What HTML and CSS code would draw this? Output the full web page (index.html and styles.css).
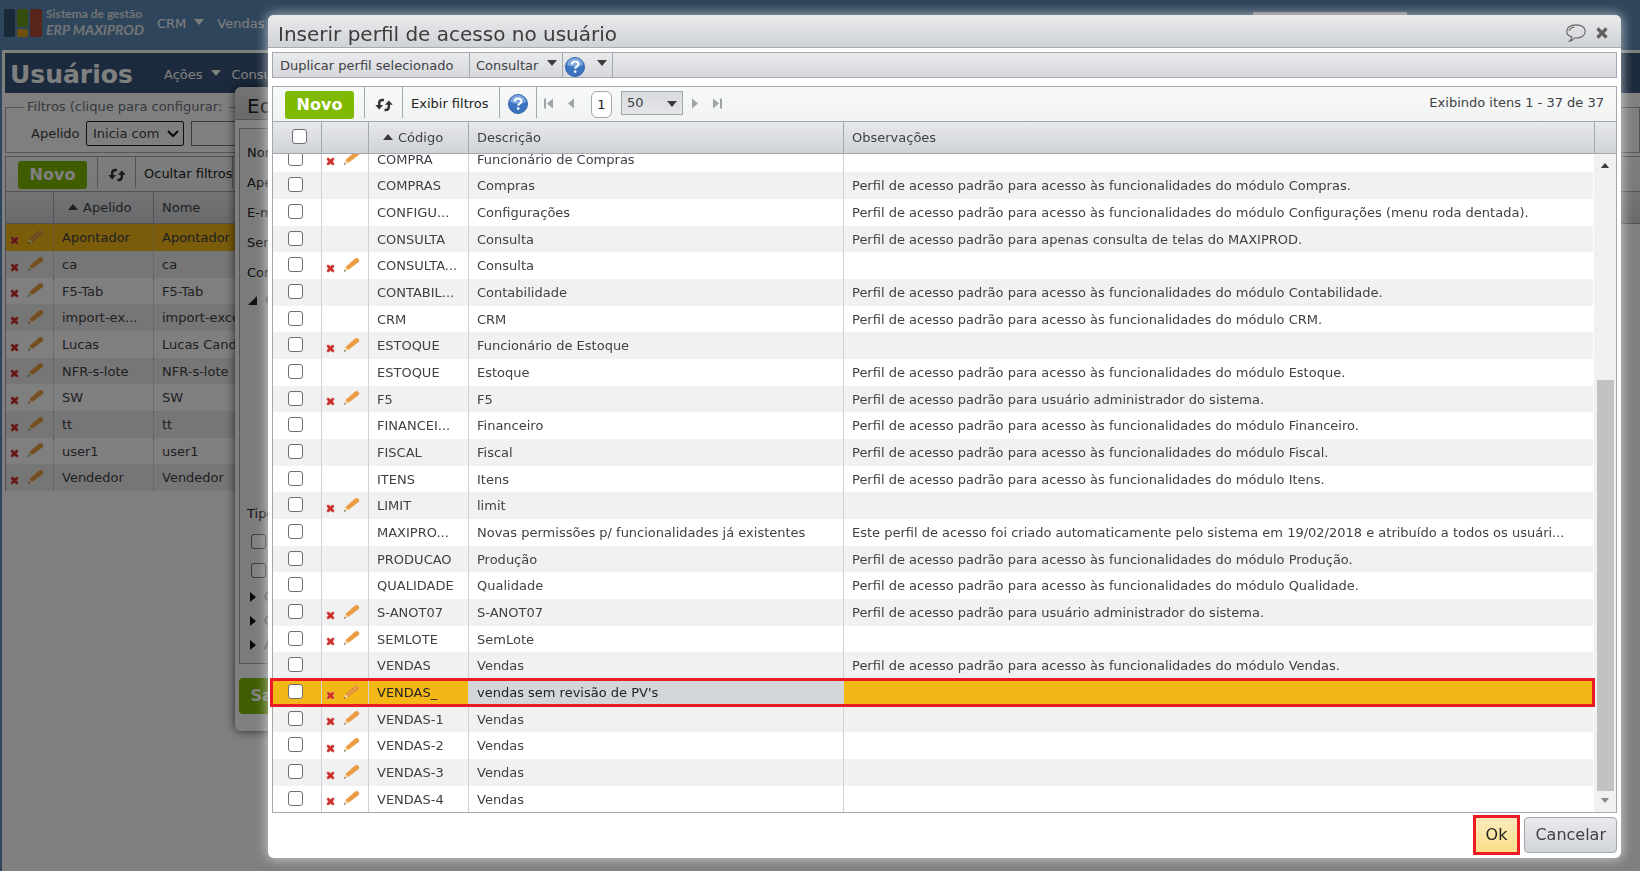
FILE: index.html
```html
<!DOCTYPE html>
<html lang="pt-BR">
<head>
<meta charset="utf-8">
<title>Usuários - ERP MAXIPROD</title>
<link rel="stylesheet" href="styles.css">
</head>
<body>
<svg class="defs" aria-hidden="true">
  <symbol id="i-pencil" viewBox="0 0 18 16"><path d="M1 15l1.600-4.800 3.200 2.800z" fill="#f3d9a0"/><path d="M1 15.200l.8-2 1.300 1.100z" fill="#4a4038"/><path d="M2.600 10.200L12.800 1q2.200-1 3.700.6t.3 3.200L5.800 13z" fill="#eb9d45"/></symbol>
  <symbol id="i-pencil-on" viewBox="0 0 18 16"><path d="M1 15l1.600-4.800 3.200 2.800z" fill="#f3d9a0"/><path d="M1 15.200l.8-2 1.300 1.100z" fill="#4a4038"/><path d="M2.600 10.200L12.800 1q2.200-1 3.700.6t.3 3.200L5.800 13z" fill="#eb9d45"/><path d="M3 11L14 1.500M5.500 13L16.500 4" stroke="#b5702a" stroke-dasharray="1.500 1.500" fill="none"/></symbol>
  <symbol id="i-x" viewBox="0 0 9 9"><path d="M1 1h2l1.500 1.500L6 1h2v2L6.500 4.500 8 6v2H6L4.500 6.500 3 8H1V6l1.500-1.500L1 3z" fill="#cf2b2b" stroke="#d98a80" stroke-width=".6"/></symbol>
  <symbol id="i-refresh" viewBox="0 0 18 14"><g fill="none" stroke="#333" stroke-width="2.400"><path d="M9 2H7.500Q4.200 2 4.200 5v3.500"/><path d="M9.500 12h1q3.300 0 3.300-3V5.500"/></g><path d="M.3 7h7.800L4.200 11.600zM9.900 6.800h7.800L13.800 2.400z" fill="#333"/></symbol>
  <symbol id="i-help" viewBox="0 0 20 20"><circle cx="10" cy="10" r="9.500" fill="#3c73c0" stroke="#3264ae"/><path d="M2 8a8 7 0 0 1 16 0q-8 3-16 0z" fill="#7fa9de"/><path d="M6.800 7.600q0-3.200 3.300-3.200t3.300 2.800q0 1.500-1.700 2.500-1.400.8-1.400 2" fill="none" stroke="#fff" stroke-width="2"/><circle cx="10.200" cy="14.600" r="1.300" fill="#fff"/></symbol>
  <symbol id="i-down" viewBox="0 0 10 6"><path d="M0 0h10L5 6z" fill="currentColor"/></symbol>
  <symbol id="i-up" viewBox="0 0 10 6"><path d="M0 6h10L5 0z" fill="currentColor"/></symbol>
  <symbol id="i-left" viewBox="0 0 6 10"><path d="M6 0v10L0 5z" fill="currentColor"/></symbol>
  <symbol id="i-right" viewBox="0 0 6 10"><path d="M0 0v10l6-5z" fill="currentColor"/></symbol>
  <symbol id="i-first" viewBox="0 0 9 10"><path d="M0 0h2v10H0zM9 0v10L3 5z" fill="currentColor"/></symbol>
  <symbol id="i-last" viewBox="0 0 9 10"><path d="M7 0h2v10H7zM0 0v10l6-5z" fill="currentColor"/></symbol>
</svg>

<div class="app">
  <header class="top">
    <svg class="logo" viewBox="0 0 38 28"><rect width="11" height="28" rx="2" fill="#34536f"/><rect x="13" width="11" height="18" rx="2" fill="#6f9a1c"/><rect x="13" y="20" width="11" height="8" rx="2" fill="#d8a21c"/><rect x="26" width="12" height="28" rx="2" fill="#b04a34"/></svg>
    <div class="brand"><span>Sistema de gestão</span><em>ERP MAXIPROD</em></div>
    <nav class="topnav">
      <a href="#">CRM <svg class="ar"><use href="#i-down"/></svg></a>
      <a href="#">Vendas</a>
    </nav>
    <input class="search" aria-label="Pesquisar">
  </header>
  <main class="page">
    <div class="titlebar">
      <h1>Usuários</h1>
      <a href="#">Ações <svg class="ar"><use href="#i-down"/></svg></a>
      <a href="#">Consultar</a>
    </div>
    <fieldset class="filters">
      <legend>Filtros (clique para configurar: </legend>
      <label for="ap">Apelido</label>
      <span class="selwrap"><select id="op" aria-label="Operador"><option>Inicia com</option></select><svg viewBox="0 0 12 8"><path d="M1 1l5 5 5-5" fill="none" stroke="#111" stroke-width="2"/></svg></span>
      <input id="ap" type="text">
    </fieldset>
    <section class="grid back">
      <div class="gtools">
        <div class="cell c-novo"><button class="novo">Novo</button></div>
        <div class="cell c-ref"><svg class="ref"><use href="#i-refresh"/></svg></div>
        <div class="cell c-txt">Ocultar filtros</div>
      </div>
      <table class="users">
        <colgroup><col class="u1"><col class="u2"><col class="u3"><col></colgroup>
        <thead><tr><th></th><th class="sorted"><svg class="ar"><use href="#i-up"/></svg>Apelido</th><th>Nome</th><th></th></tr></thead>
        <tbody id="users"></tbody>
      </table>
    </section>
  </main>

  <div class="dlg1">
    <div class="d1title">Editar</div>
    <div class="d1body">
      <span>Nome</span><span>Apelido</span><span>E-mail</span><span>Senha</span><span>Confirmar</span>
      <span class="node open"><svg viewBox="0 0 8 8"><path d="M8 0v8H0z" fill="#222"/></svg>Clientes</span>
      <span class="tipo">Tipo</span>
      <label class="ck"><input type="checkbox" aria-label="Opção 1"></label>
      <label class="ck"><input type="checkbox" aria-label="Opção 2"></label>
      <span class="node"><svg viewBox="0 0 6 10"><path d="M0 0v10l6-5z" fill="#111"/></svg>Outros</span>
      <span class="node"><svg viewBox="0 0 6 10"><path d="M0 0v10l6-5z" fill="#111"/></svg>Outros</span>
      <span class="node"><svg viewBox="0 0 6 10"><path d="M0 0v10l6-5z" fill="#111"/></svg>Ajustes</span>
    </div>
    <button class="salvar">Salvar</button>
  </div>
  <div class="shade"></div>
</div>

<div class="modal" role="dialog" aria-labelledby="mt">
  <div class="mtitle">
    <h2 id="mt">Inserir perfil de acesso no usuário</h2>
    <button class="ico" aria-label="Comentário"><svg class="bubble" viewBox="0 0 20 18" fill="none" stroke="#666" stroke-width="1.200"><path d="M5.800 12.900Q.7 11.400.7 7.400C.7 3.300 4.800.8 10 .8s9.300 2.500 9.300 6.600-4.100 6.600-9.300 6.600H8.500Q6.500 16.700 3.600 17.200 5.600 15.500 5.800 12.900z"/><path d="M3.200 7Q3.800 3.700 8.500 3"/></svg></button>
    <button class="ico" aria-label="Fechar"><svg class="close" viewBox="0 0 12 12"><path d="M1.500 1.500l9 9M10.500 1.500l-9 9" stroke="#606060" stroke-width="3.200"/></svg></button>
  </div>
  <div class="mbody">
    <div class="menu">
      <button class="m-dup">Duplicar perfil selecionado</button>
      <button class="m-con">Consultar <svg class="ar"><use href="#i-down"/></svg></button>
      <button class="m-help" aria-label="Ajuda"><svg class="help"><use href="#i-help"/></svg><svg class="ar"><use href="#i-down"/></svg></button>
    </div>
    <section class="grid front">
      <div class="gtools">
        <div class="cell c-novo"><button class="novo">Novo</button></div>
        <div class="cell c-ref"><svg class="ref"><use href="#i-refresh"/></svg></div>
        <div class="cell c-txt">Exibir filtros</div>
        <div class="cell c-help"><svg class="help"><use href="#i-help"/></svg></div>
        <div class="pager">
          <svg class="p9"><use href="#i-first"/></svg><svg class="p6"><use href="#i-left"/></svg>
          <input class="pg" value="1" aria-label="Página">
          <span class="size"><select aria-label="Itens por página"><option>50</option></select><svg class="ar"><use href="#i-down"/></svg></span>
          <svg class="p6"><use href="#i-right"/></svg><svg class="p9"><use href="#i-last"/></svg>
        </div>
        <div class="count">Exibindo itens 1 - 37 de 37</div>
      </div>
      <table class="head">
        <colgroup><col class="k1"><col class="k2"><col class="k3"><col class="k4"><col><col class="k6"></colgroup>
        <thead><tr><th class="all"><input type="checkbox" aria-label="Selecionar todos"></th><th></th><th class="sorted"><svg class="ar"><use href="#i-up"/></svg>Código</th><th>Descrição</th><th>Observações</th><th></th></tr></thead>
      </table>
      <div class="gbody">
        <div class="clip">
          <table class="rows">
            <colgroup><col class="k1"><col class="k2"><col class="k3"><col class="k4"><col></colgroup>
            <tbody id="rows"></tbody>
          </table>
        </div>
        <div class="bar"><svg class="ar"><use href="#i-up"/></svg><i></i><svg class="ar dn"><use href="#i-down"/></svg></div>
        <div class="mark"></div>
      </div>
    </section>
    <div class="foot"><button class="ok">Ok</button><button class="cancel">Cancelar</button></div>
  </div>
</div>
<script src="app.js"></script>
</body>
</html>
```
FILE: app.js
```js
const base = 'Perfil de acesso padrão para acesso às funcionalidades do módulo ';
const admin = 'Perfil de acesso padrão para usuário administrador do sistema.';
const icons = on => '<svg class="x"><use href="#i-x"/></svg><svg class="pen"><use href="#' + (on ? 'i-pencil-on' : 'i-pencil') + '"/></svg>';

// code, description, notes, editable, selected
const profiles = [
  ['COMPRA', 'Funcionário de Compras', '', 1],
  ['COMPRAS', 'Compras', base + 'Compras.'],
  ['CONFIGU...', 'Configurações', base + 'Configurações (menu roda dentada).'],
  ['CONSULTA', 'Consulta', 'Perfil de acesso padrão para apenas consulta de telas do MAXIPROD.'],
  ['CONSULTA...', 'Consulta', '', 1],
  ['CONTABIL...', 'Contabilidade', base + 'Contabilidade.'],
  ['CRM', 'CRM', base + 'CRM.'],
  ['ESTOQUE', 'Funcionário de Estoque', '', 1],
  ['ESTOQUE', 'Estoque', base + 'Estoque.'],
  ['F5', 'F5', admin, 1],
  ['FINANCEI...', 'Financeiro', base + 'Financeiro.'],
  ['FISCAL', 'Fiscal', base + 'Fiscal.'],
  ['ITENS', 'Itens', base + 'Itens.'],
  ['LIMIT', 'limit', '', 1],
  ['MAXIPRO...', 'Novas permissões p/ funcionalidades já existentes', 'Este perfil de acesso foi criado automaticamente pelo sistema em 19/02/2018 e atribuído a todos os usuári...'],
  ['PRODUCAO', 'Produção', base + 'Produção.'],
  ['QUALIDADE', 'Qualidade', base + 'Qualidade.'],
  ['S-ANOT07', 'S-ANOT07', admin, 1],
  ['SEMLOTE', 'SemLote', '', 1],
  ['VENDAS', 'Vendas', base + 'Vendas.'],
  ['VENDAS_', "vendas sem revisão de PV's", '', 1, 1],
  ['VENDAS-1', 'Vendas', '', 1],
  ['VENDAS-2', 'Vendas', '', 1],
  ['VENDAS-3', 'Vendas', '', 1],
  ['VENDAS-4', 'Vendas', '', 1]
];
document.getElementById('rows').innerHTML = profiles.map(([c, d, o, e, on]) =>
  `<tr class="${on ? 'on' : ''}"><td class="sel"><input type="checkbox" aria-label="${c}"></td><td class="act">${e ? icons(on) : ''}</td><td>${c}</td><td>${d}</td><td>${o}</td></tr>`).join('');

const users = ['Apontador', 'ca', 'F5-Tab', ['import-ex...', 'import-excel'], ['Lucas', 'Lucas Candido'], 'NFR-s-lote', 'SW', 'tt', 'user1', 'Vendedor'];
document.getElementById('users').innerHTML = users.map((u, i) => {
  const [a, n] = Array.isArray(u) ? u : [u, u];
  return `<tr class="${i ? '' : 'on'}"><td class="act">${icons(!i)}</td><td>${a}</td><td>${n}</td></tr>`;
}).join('');
```
FILE: styles.css
```css
* { box-sizing: border-box; }
body { margin: 0; font: 13px/16px Verdana, "DejaVu Sans", sans-serif; color: #3f4145; }
button, input, select { font: inherit; color: inherit; margin: 0; }
a { color: inherit; text-decoration: none; }
svg { display: block; flex: none; }
.defs { position: absolute; width: 0; height: 0; }
.ar { width: 10px; height: 6px; color: #3c3c3c; }
input[type="checkbox"] { appearance: none; display: block; width: 15px; height: 15px; border: 1px solid #6f6f72; border-radius: 3px; background: #fff; }

.app { position: relative; min-height: 100vh; overflow: hidden; background: #5c8ab6; display: flex; flex-direction: column; }
.shade { position: absolute; inset: 0; background: rgba(0, 0, 0, .5); }
.top { display: flex; height: 50px; padding-left: 4px; color: #fff; }
.logo { width: 38px; height: 28px; margin-top: 9px; }
.brand { display: flex; flex-direction: column; width: 115px; padding: 6px 0 0 4px; font: bold 12px/15px Lato, sans-serif; white-space: nowrap; color: #e4e8ec; }
.brand em { font-size: 14px; line-height: 17px; }
.topnav { display: flex; gap: 13px; padding-top: 16px; }
.topnav a, .titlebar a { display: flex; gap: 8px; }
.topnav .ar, .titlebar .ar { color: #fff; margin-top: 3px; }
.search { width: 154px; height: 22px; margin: 12px 233px 0 auto; border: 0; background: #fff; }
.page { flex: 1; margin-left: 2px; background: #fff; padding: 3px 0 0 3px; }
.titlebar { display: flex; gap: 18px; height: 40px; padding: 14px 0 0 5px; background: #365478; color: #fff; white-space: nowrap; }
.titlebar h1 { width: 136px; margin: -7px 0 0; font-size: 25px; line-height: 30px; }
.titlebar a + a { margin-left: -7px; }
.filters { display: flex; align-items: center; height: 54px; margin: 6px 0 0; padding: 0 0 0 25px; border: 1px solid #a8abb3; }
.filters legend { margin-left: -7px; padding: 0 3px; color: #6d727a; line-height: 16px; white-space: pre; }
.filters label { width: 55px; }
.selwrap { position: relative; }
.selwrap select { appearance: none; width: 98px; height: 25px; padding: 0 6px; border: 1px solid #222; border-radius: 2px; background: #fff; }
.selwrap svg { position: absolute; right: 5px; top: 9px; width: 12px; height: 8px; }
.filters input { width: 150px; height: 25px; margin-left: 7px; border: 1px solid #777; }

.grid { border: 1px solid #a3a7af; }
.gtools { display: flex; align-items: stretch; height: 34px; background: linear-gradient(#f8faf9, #f1f2f2); }
.cell { display: flex; justify-content: center; align-items: center; height: 31px; border-right: 1px solid #a3a7af; color: #222; white-space: nowrap; }
.c-novo { width: 92px; }
.c-ref { width: 38px; }
.cell.c-txt { width: 97px; padding: 2px 0 0 8px; justify-content: flex-start; }
.c-help { width: 37px; }
.novo { flex: none; width: 69px; height: 28px; margin: 4px 0 0 2px; padding: 0; border: 0; border-radius: 3px; background: #7fba00; color: #fff; font-weight: bold; font-size: 16px; line-height: 26px; }
.ref { width: 18px; height: 14px; margin-top: 4px; }
.help { width: 20px; height: 20px; }
.c-help .help { margin-top: 2px; }

table { width: 100%; table-layout: fixed; border-collapse: separate; border-spacing: 0; }
th { height: 33px; padding: 0 8px; text-align: left; font-weight: normal; border: solid #a3a7af; border-width: 1px 1px 1px 0; background: linear-gradient(#e7e8eb, #d0d3d6); white-space: nowrap; }
th:last-child { border-right: 0; }
.sorted .ar { display: inline-block; margin: 0 5px 2px 6px; }
td { padding: 1px 8px 0; overflow: hidden; text-overflow: ellipsis; white-space: nowrap; border-right: 1px solid #d0d2d5; }
td:last-child { border-right: 0; }
td.act { padding: 0; }
.act svg { display: inline-block; vertical-align: middle; }
.x { width: 9px; height: 9px; margin: 4px 8px 0 4px; }
.pen { width: 17px; height: 16px; margin-top: -3px; }
tbody tr { height: 27px; }

.back { margin-top: 3px; border-right: 0; border-bottom: 0; }
.u1 { width: 48px; }
.u2 { width: 100px; }
.u3 { width: 400px; }
.users td { border-right: 1px dotted #b5b5b8; }
.users tr:nth-child(3n) { height: 26px; }
.users tbody tr:nth-child(even) td { background: #ececec; }
.users tbody tr.on td { background: #f4b816; }

.dlg1 { position: absolute; left: 235px; top: 87px; right: 200px; height: 644px; padding: 0 4px; border-radius: 6px; background: #fff; box-shadow: 0 0 10px rgba(0, 0, 0, .7); }
.d1title { height: 33px; margin: 0 -4px; padding: 8px 12px 0; border-bottom: 1px solid #a8abb0; border-radius: 6px 6px 0 0; background: linear-gradient(#e6e7ea, #d0d3d6); font-size: 20px; line-height: 22px; color: #222; }
.d1body { display: flex; flex-direction: column; height: 536px; margin-top: 8px; padding: 16px 7px 0; border: 1px solid #a8abb0; background: linear-gradient(#f4f6f6, #f8f8f8); gap: 14px; color: #222; }
.d1body span { line-height: 16px; }
.d1body .node { display: flex; gap: 8px; height: 10px; align-items: center; color: #888; margin-left: 3px; }
.d1body .open { margin-left: 1px; }
.node svg { width: 6px; height: 10px; }
.open svg { width: 9px; height: 9px; }
.d1body .tipo { margin-top: 187px; margin-bottom: -2px; }
.ck { padding-left: 4px; }
.salvar { width: 80px; height: 36px; margin-top: 14px; padding: 0; border: 0; border-radius: 4px; background: #7fba00; color: #fff; font-weight: bold; font-size: 16px; }

.modal { position: fixed; inset: 15px 19px 13px 268px; display: flex; flex-direction: column; border-radius: 6px; background: #fff; box-shadow: 0 0 12px 1px rgba(255, 255, 255, .6); }
.mtitle { display: flex; align-items: center; gap: 10px; height: 33px; padding: 6px 13px 0 10px; border-bottom: 1px solid #a8abb0; border-radius: 6px 6px 0 0; background: linear-gradient(#e9eaec, #d0d3d6); }
.mtitle h2 { flex: 1; margin: 0; font-weight: normal; font-size: 20px; line-height: 24px; color: #3c3c3c; }
.ico { padding: 0; border: 0; background: none; }
.ico svg { margin-top: -2px; }
.bubble { width: 20px; height: 18px; }
.close { width: 12px; height: 12px; }
.mbody { flex: 1; display: flex; flex-direction: column; min-height: 0; padding: 4px 4px 3px; }
.menu { display: flex; height: 26px; border: 1px solid #a3a7af; background: linear-gradient(#e9eaec, #d6d8dc); }
.menu button { display: flex; align-items: center; padding: 1px 7px 0; border: 0; border-right: 1px solid #a3a7af; background: none; white-space: nowrap; }
.menu .ar { margin-bottom: 5px; }
.m-dup { width: 197px; }
.menu .m-con { width: 93px; justify-content: space-between; padding-right: 5px; padding-left: 6px; }
.menu .m-help { width: 50px; justify-content: space-between; padding: 0 5px 0 2px; }
.menu .help { margin-top: 3px; }
.front { flex: 1; display: flex; flex-direction: column; min-height: 0; margin-top: 8px; }
.pager { display: flex; align-items: center; height: 31px; padding: 2px 0 0 7px; color: #a0a4aa; }
.p6 { width: 6px; height: 11px; }
.p9 { width: 9px; height: 11px; }
.pager .p9:first-child { margin-right: 15px; }
.pg { width: 21px; height: 27px; margin: 1px 9px 0 17px; padding: 0; border: 1px solid #a3a7af; border-radius: 6px; background: #fff; color: #222; text-align: center; }
.size { position: relative; margin: -2px 9px 0 0; color: #3f4145; }
.size select { appearance: none; display: block; width: 62px; height: 24px; padding: 0 5px; border: 1px solid #a3a7af; background: linear-gradient(#d9dbde, #e4e5e8); }
.size .ar { position: absolute; right: 6px; top: 10px; }
.pager .p9:last-child { margin-left: 15px; }
.count { margin-left: auto; padding: 8px 12px 0 0; }
.k1 { width: 49px; }
.k2 { width: 47px; }
.k3 { width: 100px; }
.k4 { width: 375px; }
.k6 { width: 21px; }
.all { padding: 0 0 2px 19px; }
.gbody { flex: 1; position: relative; display: flex; min-height: 0; }
.clip { flex: 1; display: flex; align-items: flex-end; min-height: 0; min-width: 0; overflow: hidden; padding-right: 1px; }
.rows tr:nth-child(3n+1) { height: 26px; }
.rows tr:nth-child(even) { background: #f1f1f1; }
.rows tr.on { background: #f4b816; color: #222; }
.rows tr.on td:nth-child(4) { background: #d2d6da; }
.rows td.sel { padding: 0 0 2px 15px; }
.bar { display: flex; flex-direction: column; align-items: center; width: 22px; padding: 9px 0; background: #f1f1f1; color: #505050; }
.bar i { width: 17px; height: 411px; margin: auto 0 7px; background: #c1c2c2; }
.bar .ar { height: 5px; }
.bar .dn { color: #8b8b8e; }
.mark { position: absolute; left: -3px; right: 21px; bottom: 105px; height: 29px; border: 3px solid #ed1c24; }
.foot { display: flex; justify-content: flex-end; align-items: center; gap: 4px; padding-top: 2px; }
.foot button { height: 36px; padding: 0 10px; border: 1px solid #a3a7af; border-radius: 4px; font-size: 16px; background: linear-gradient(#e9eaec, #d2d5d8); }
.foot .ok { height: 40px; padding: 0 10px; border: 3px solid #ed1c24; border-radius: 0; background: linear-gradient(#fae9bd, #fae08a); color: #222; }
```
